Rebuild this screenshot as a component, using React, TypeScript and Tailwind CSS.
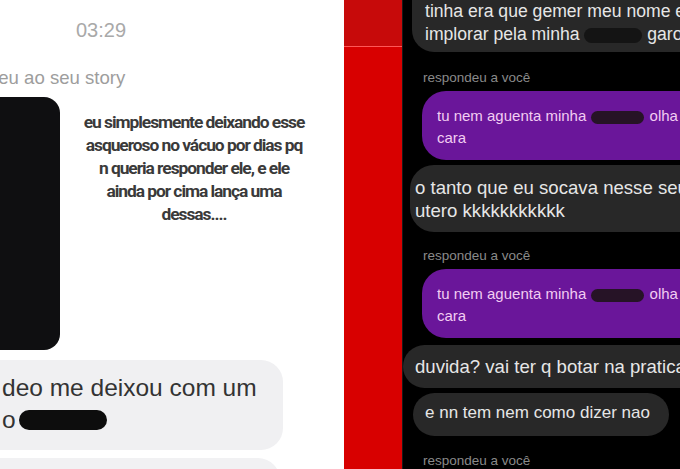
const sans = { fontFamily: '"Liberation Sans", Arial, sans-serif' }

function Label({ className = '' }: { className?: string }) {
  return (
    <div className={`ml-[20px] h-[14px] shrink-0 text-[13.5px] leading-[14px] text-[#8a8a8a] ${className}`}>
      respondeu a você
    </div>
  )
}

function Censor({ className = '' }: { className?: string }) {
  return <span className={`inline-block rounded-full align-middle ${className}`} />
}

function PurpleBubble({ className = '' }: { className?: string }) {
  return (
    <div className={`ml-[19px] h-[69px] shrink-0 rounded-l-[24px] bg-[#6a169a] pl-[15px] pt-[14px] text-[15px] leading-[22px] text-[#f2cdf2] whitespace-nowrap ${className}`}>
      <div>
        tu nem aguenta minha <Censor className="mx-[1px] h-[13px] w-[53px] bg-[#261326]" /> olha
      </div>
      <div>cara</div>
    </div>
  )
}

export default function App() {
  return (
    <div className="flex h-[469px] w-[680px] overflow-hidden" style={sans}>
      {/* left: light screenshot */}
      <div className="relative flex w-[344px] shrink-0 flex-col overflow-hidden bg-white">
        <div className="ml-[76px] mt-[18px] shrink-0 text-[20px] leading-[24px] text-[#a9a9a9]">03:29</div>
        <div className="ml-[-69px] mt-[25px] shrink-0 whitespace-nowrap text-[18.6px] leading-[22px] text-[#9d9d9d]">
          respondeu ao seu story
        </div>
        <div className="mt-[8px] flex shrink-0">
          <div className="h-[253px] w-[60px] shrink-0 rounded-r-[16px] bg-[#0f0f11]" />
          <div
            className="ml-[16px] w-[236px] pt-[14px] text-center text-[17.4px] font-bold leading-[23px] tracking-[-0.06em] text-[#3a3a3a] whitespace-nowrap"
            style={{ fontFamily: '"Liberation Sans Narrow", "Roboto", sans-serif' }}
          >
            eu simplesmente deixando esse
            <br />
            asqueroso no vácuo por dias pq
            <br />
            n queria responder ele, e ele
            <br />
            ainda por cima lança uma
            <br />
            dessas....
          </div>
        </div>
        <div className="mt-[10px] h-[90px] w-[283px] shrink-0 rounded-r-[22px] bg-[#f0f0f2] pl-[2px] pt-[12px] text-[24.5px] leading-[32px] text-[#333]">
          <div className="whitespace-nowrap">deo me deixou com um</div>
          <div className="flex items-center">
            o<Censor className="ml-[3px] h-[20px] w-[88px] bg-[#0d0d0d]" />
          </div>
        </div>
        <div className="mt-[8px] h-[40px] w-[280px] shrink-0 rounded-tr-[22px] bg-[#f1f1f3]" />
      </div>

      {/* red strip */}
      <div className="flex w-[58px] shrink-0 flex-col">
        <div className="h-[46px] bg-[#c70a0a]" />
        <div className="h-[1px] bg-[#ff5757]" />
        <div className="flex-1 bg-[#d80000]" />
      </div>

      {/* right: dark chat */}
      <div className="flex flex-1 flex-col overflow-hidden border-l border-[#1a1a1a] bg-black text-[17px]">
        <div className="ml-[9px] h-[52px] shrink-0 rounded-bl-[22px] bg-[#282828] pl-[13px] text-[17.6px] leading-[23px] text-[#e6e6e6] whitespace-nowrap">
          <div>tinha era que gemer meu nome e</div>
          <div>
            implorar pela minha <Censor className="h-[15px] w-[58px] bg-[#141414]" /> garota
          </div>
        </div>
        <Label className="mt-[19px]" />
        <PurpleBubble className="mt-[6px]" />
        <div className="ml-[7px] mt-[5px] h-[67px] shrink-0 rounded-l-[24px] bg-[#282828] pl-[5px] pt-[11px] text-[18.6px] leading-[23px] text-[#e6e6e6] whitespace-nowrap">
          <div>o tanto que eu socava nesse seu</div>
          <div>utero kkkkkkkkkkk</div>
        </div>
        <Label className="mt-[17px]" />
        <PurpleBubble className="mt-[6px]" />
        <div className="ml-[0px] mt-[7px] h-[43px] shrink-0 rounded-l-[22px] bg-[#282828] pl-[12px] pt-[10px] text-[18.6px] leading-[23px] text-[#e6e6e6] whitespace-nowrap">
          duvida? vai ter q botar na pratica
        </div>
        <div className="ml-[10px] mt-[5px] h-[43px] w-[256px] shrink-0 rounded-[22px] bg-[#282828] pl-[12px] pt-[8px] leading-[23px] text-[#e6e6e6] whitespace-nowrap">
          e nn tem nem como dizer nao
        </div>
        <Label className="mt-[18px]" />
      </div>
    </div>
  )
}
